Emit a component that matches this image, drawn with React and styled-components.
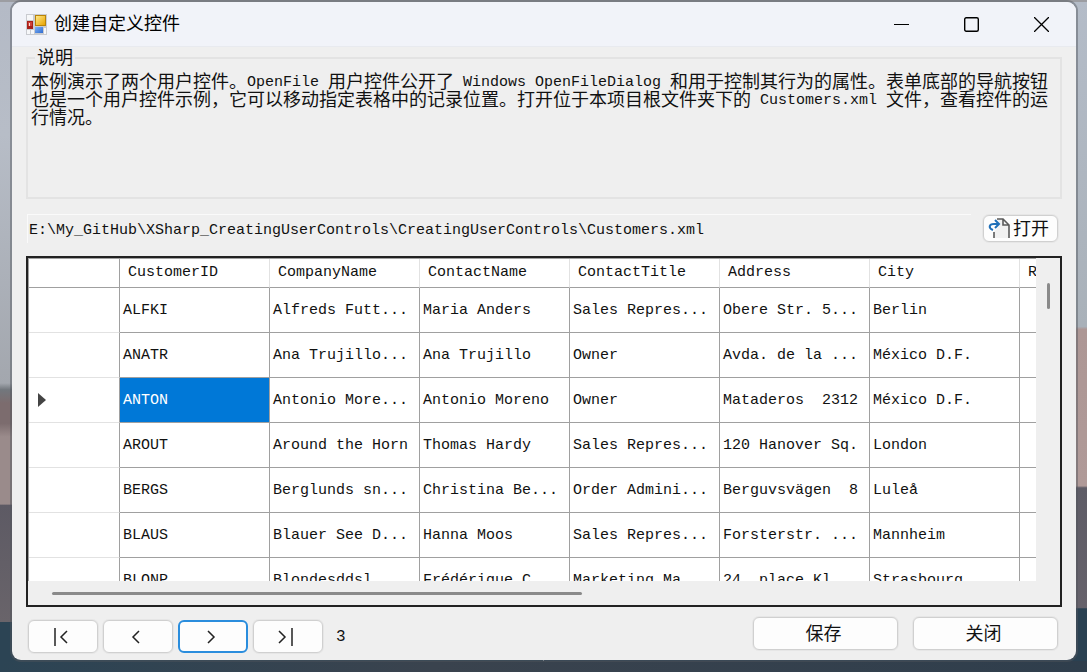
import React from "react";
import styled, { createGlobalStyle } from "styled-components";

const Global = createGlobalStyle`
  *, *::before, *::after { box-sizing: border-box; }
  body { margin: 0; }
  button, input { font: inherit; color: inherit; margin: 0; }
`;

const CJK = `"Noto Sans CJK SC", sans-serif`;
const MONO = `"Liberation Mono", "Noto Sans CJK SC", monospace`;

const Desktop = styled.div`
  height: 100vh;
  min-height: 560px;
  display: flex;
  padding: 2px 11px 12px 12px;
  font: 18px/22px ${CJK};
  color: #111;
  background:
    linear-gradient(90deg, #2c4454, #3a434e 40%, #2f3e4c) bottom / 100% 11px no-repeat,
    linear-gradient(#9c9da2, #9c9da2) top / 100% 2px no-repeat,
    linear-gradient(#b4bac6 0%, #b7bdc7 20%, #a3a7ae 57%, #72777d 58%, #7c6c6e 60%, #7c6c6e 63%, #9a8b8b 65%, #9a8b8b 75%, #5d5a64 75.2%, #69646a 92.5%, #2c4454 92.6%) left / 50% 100% no-repeat,
    linear-gradient(#b4bcc8 0%, #a9b1b9 48.6%, #ad9795 49%, #b09a98 72.3%, #5e5c66 72.6%, #66626b 90.4%, #2a4152 90.6%) right / 50% 100% no-repeat;
`;

const Window = styled.main`
  flex: 1;
  min-width: 0;
  display: flex;
  flex-direction: column;
  overflow: hidden;
  border-radius: 9px;
  background: #efefef;
  box-shadow: 0 0 0 2px rgba(80, 84, 90, 0.45);
`;

const TitleBar = styled.header`
  flex: none;
  height: 45px;
  display: flex;
  align-items: center;
  gap: 7px;
  padding-left: 14px;
  border-bottom: 1px solid #e8eaef;
  background: #f1f3f9;
`;

const Title = styled.h1`
  flex: 1;
  margin: 0;
  padding-bottom: 4px;
  font: 18px/22px ${CJK};
  color: #000;
`;

const CaptionButtons = styled.div`
  display: flex;
`;

const CaptionButton = styled.button`
  width: 70px;
  height: 44px;
  display: grid;
  place-items: center;
  padding: 0;
  border: 0;
  background: none;
`;

const Form = styled.div`
  flex: 1;
  min-height: 0;
  display: flex;
  flex-direction: column;
  padding: 0 14px 7px;
`;

const Group = styled.fieldset`
  flex: none;
  min-width: 0;
  min-height: 152px;
  margin: 0;
  padding: 2px 3px;
  border: 2px solid #e3e3e3;
`;

const Legend = styled.legend`
  margin-left: 4px;
  padding: 0 2px 4px;
  line-height: 18px;
`;

const Description = styled.p`
  margin: 0;
  line-height: 18px;
`;

const Latin = styled.span`
  font: 15px/0 ${MONO};
  vertical-align: 2px;
  white-space: pre-wrap;
`;

const FileRow = styled.div`
  flex: none;
  display: flex;
  align-items: center;
  gap: 12px;
  padding: 15px 4px 13px 1px;
`;

const PathBox = styled.input`
  flex: 1;
  min-width: 0;
  height: 29px;
  padding: 2px 1px 0;
  border: 0;
  border-top: 1px solid #fafafa;
  border-left: 1px solid #fafafa;
  background: transparent;
  font: 15px/18px ${MONO};
`;

const Button = styled.button`
  width: ${(p) => p.$width}px;
  height: ${(p) => p.$height}px;
  display: flex;
  align-items: center;
  justify-content: center;
  gap: 3px;
  padding: 0 4px 0 0;
  border: ${(p) => (p.$focused ? "2px solid #2a8ddd" : "1px solid #d0d0d0")};
  border-radius: 6px;
  background: #fdfdfd;
  box-shadow: ${(p) => (p.$focused ? "none" : "0 0 0 1px #e6e6e6")};
  line-height: 22px;
`;

const ButtonText = styled.span`
  padding-bottom: 3px;
`;

const Grid = styled.section`
  flex: 1;
  min-height: 0;
  display: grid;
  grid-template: minmax(0, 1fr) 24px / minmax(0, 1fr) 24px;
  border: 2px solid #222;
`;

const Viewport = styled.div`
  overflow: hidden;
  background: #fff;
  border-top: 1px solid #a0a0a0;
  border-left: 1px solid #a0a0a0;
`;

const Table = styled.table`
  width: 1140px;
  table-layout: fixed;
  border-collapse: separate;
  border-spacing: 0;
  font: 15px/18px ${MONO};
  white-space: pre;
`;

const HeadCell = styled.th`
  width: ${(p) => (p.$narrow ? 91 : 150)}px;
  height: 29px;
  padding: 0 8px;
  text-align: left;
  font-weight: 400;
  border-right: 1px solid ${(p) => (p.$narrow ? "#a0a0a0" : "#e2e2e2")};
  border-bottom: 1px solid #a0a0a0;
`;

const RowHead = styled.th`
  height: 45px;
  padding: 0 9px;
  text-align: left;
  border-right: 1px solid #a0a0a0;
  border-bottom: 1px solid #e2e2e2;
`;

const Cell = styled.td`
  height: 45px;
  padding: 2px 0 0 3px;
  overflow: hidden;
  border-right: 1px solid #a0a0a0;
  border-bottom: 1px solid #a0a0a0;
  background: ${(p) => (p.$selected ? "#0078d7" : "#fff")};
  color: ${(p) => (p.$selected ? "#fff" : "inherit")};
`;

const RowMarker = styled.svg`
  display: block;
`;

const VerticalTrack = styled.div`
  padding: 25px 0 0 11px;
`;

const HorizontalTrack = styled.div`
  grid-column: 1 / -1;
  padding: 11px 8px 0 24px;
`;

const Thumb = styled.div`
  border-radius: 2px;
  background: #8a8a8a;
  width: ${(p) => (p.$vertical ? "3px" : "53%")};
  height: ${(p) => (p.$vertical ? "26px" : "3px")};
`;

const Footer = styled.footer`
  flex: none;
  display: flex;
  justify-content: space-between;
  align-items: flex-start;
  padding: 10px 4px 0 2px;
`;

const Navigator = styled.nav`
  display: flex;
  align-items: center;
  gap: 5px;
  padding-top: 3px;
`;

const Position = styled.output`
  padding-left: 8px;
  font: 16px/18px ${MONO};
`;

const Actions = styled.div`
  display: flex;
  gap: 15px;
`;

const columns = ["CustomerID", "CompanyName", "ContactName", "ContactTitle", "Address", "City", "Region"];

const customers = [
  ["ALFKI", "Alfreds Futt...", "Maria Anders", "Sales Repres...", "Obere Str. 5...", "Berlin", ""],
  ["ANATR", "Ana Trujillo...", "Ana Trujillo", "Owner", "Avda. de la ...", "México D.F.", ""],
  ["ANTON", "Antonio More...", "Antonio Moreno", "Owner", "Mataderos  2312", "México D.F.", ""],
  ["AROUT", "Around the Horn", "Thomas Hardy", "Sales Repres...", "120 Hanover Sq.", "London", ""],
  ["BERGS", "Berglunds sn...", "Christina Be...", "Order Admini...", "Berguvsvägen  8", "Luleå", ""],
  ["BLAUS", "Blauer See D...", "Hanna Moos", "Sales Repres...", "Forsterstr. ...", "Mannheim", ""],
  ["BLONP", "Blondesddsl ...", "Frédérique C...", "Marketing Ma...", "24, place Kl...", "Strasbourg", ""],
];

const currentRow = 2;

const navigation = [
  { label: "首记录", d: "M4 1V19M16 4L10 10L16 16" },
  { label: "上一条", d: "M13 4L7 10L13 16" },
  { label: "下一条", d: "M7 4L13 10L7 16", focused: true },
  { label: "末记录", d: "M3 4L9 10L3 16M16 1V19" },
];

function AppIcon() {
  return (
    <svg width="21" height="21" viewBox="0 0 21 21" aria-hidden="true">
      <defs>
        <linearGradient id="gold" x2="1" y2="1">
          <stop stopColor="#ffe88a" />
          <stop offset="1" stopColor="#e8a400" />
        </linearGradient>
        <linearGradient id="blue" x2="1" y2="1">
          <stop stopColor="#7fb2f5" />
          <stop offset="1" stopColor="#2f6bd0" />
        </linearGradient>
      </defs>
      <rect width="21" height="21" fill="#c9cbd0" />
      <path d="M1 1H7V6H1zM1 16H4V20H1zM5 16H8V20H5zM18 14H20V20H18z" fill="#f6f7f9" />
      <rect x="9" y="1" width="11" height="11" fill="#b98408" />
      <rect x="10" y="2" width="9" height="9" fill="url(#gold)" />
      <rect x="1" y="7" width="6" height="8" fill="#a8201a" />
      <rect x="2" y="8" width="4" height="4" fill="#cf4238" />
      <rect x="3" y="9" width="1" height="3" fill="#fbd9d2" />
      <rect x="9" y="13" width="8" height="6" fill="url(#blue)" />
    </svg>
  );
}

function OpenIcon() {
  return (
    <svg width="22" height="21" viewBox="0 0 22 21" fill="none" aria-hidden="true">
      <path d="M6 13V20H21V7L15 1H9L12 6L8 12z" fill="#f1f1f1" />
      <path d="M9 1H15L21 7V20M15 1V7H21M6 14V20" stroke="#5a5a5a" strokeWidth="1.6" />
      <path d="M5 12C0 10 1 6 6 6H11" stroke="#1f6fb8" strokeWidth="2" />
      <path d="M7 2L11 6L7 10" stroke="#1f6fb8" strokeWidth="2" />
    </svg>
  );
}

export default function App() {
  return (
    <Desktop>
      <Global />
      <Window>
        <TitleBar>
          <AppIcon />
          <Title>创建自定义控件</Title>
          <CaptionButtons>
            <CaptionButton aria-label="最小化">
              <svg width="15" height="15" stroke="#000"><path d="M0 7.5H15" /></svg>
            </CaptionButton>
            <CaptionButton aria-label="最大化">
              <svg width="15" height="15" fill="none" stroke="#000" strokeWidth="1.4">
                <rect x="0.7" y="0.7" width="13.6" height="13.6" rx="1.5" />
              </svg>
            </CaptionButton>
            <CaptionButton aria-label="关闭窗口">
              <svg width="15" height="15" stroke="#000" strokeWidth="1.3"><path d="M0 0L15 15M15 0L0 15" /></svg>
            </CaptionButton>
          </CaptionButtons>
        </TitleBar>

        <Form>
          <Group>
            <Legend>说明</Legend>
            <Description>
              本例演示了两个用户控件。<Latin>OpenFile </Latin>用户控件公开了<Latin> Windows OpenFileDialog </Latin>
              和用于控制其行为的属性。表单底部的导航按钮也是一个用户控件示例，它可以移动指定表格中的记录位置。打开位于本项目根文件夹下的
              <Latin> Customers.xml </Latin>文件，查看控件的运行情况。
            </Description>
          </Group>

          <FileRow>
            <PathBox
              aria-label="文件路径"
              readOnly
              value="E:\My_GitHub\XSharp_CreatingUserControls\CreatingUserControls\Customers.xml"
            />
            <Button $width={75} $height={27}>
              <OpenIcon />
              <ButtonText>打开</ButtonText>
            </Button>
          </FileRow>

          <Grid>
            <Viewport>
              <Table>
                <thead>
                  <tr>
                    <HeadCell $narrow />
                    {columns.map((name) => (
                      <HeadCell key={name} scope="col">{name}</HeadCell>
                    ))}
                  </tr>
                </thead>
                <tbody>
                  {customers.map((row, r) => (
                    <tr key={row[0]}>
                      <RowHead scope="row">
                        {r === currentRow && (
                          <RowMarker width="8" height="14"><path d="M0 0L8 7L0 14z" fill="#444" /></RowMarker>
                        )}
                      </RowHead>
                      {row.map((value, c) => (
                        <Cell key={columns[c]} $selected={r === currentRow && c === 0}>{value}</Cell>
                      ))}
                    </tr>
                  ))}
                </tbody>
              </Table>
            </Viewport>
            <VerticalTrack><Thumb $vertical /></VerticalTrack>
            <HorizontalTrack><Thumb /></HorizontalTrack>
          </Grid>

          <Footer>
            <Navigator aria-label="记录导航">
              {navigation.map((item) => (
                <Button key={item.label} aria-label={item.label} $width={70} $height={33} $focused={item.focused}>
                  <svg width="20" height="20" fill="none" stroke="#222" strokeWidth="1.5"><path d={item.d} /></svg>
                </Button>
              ))}
              <Position>3</Position>
            </Navigator>
            <Actions>
              <Button $width={145} $height={33}><ButtonText>保存</ButtonText></Button>
              <Button $width={145} $height={33}><ButtonText>关闭</ButtonText></Button>
            </Actions>
          </Footer>
        </Form>
      </Window>
    </Desktop>
  );
}
